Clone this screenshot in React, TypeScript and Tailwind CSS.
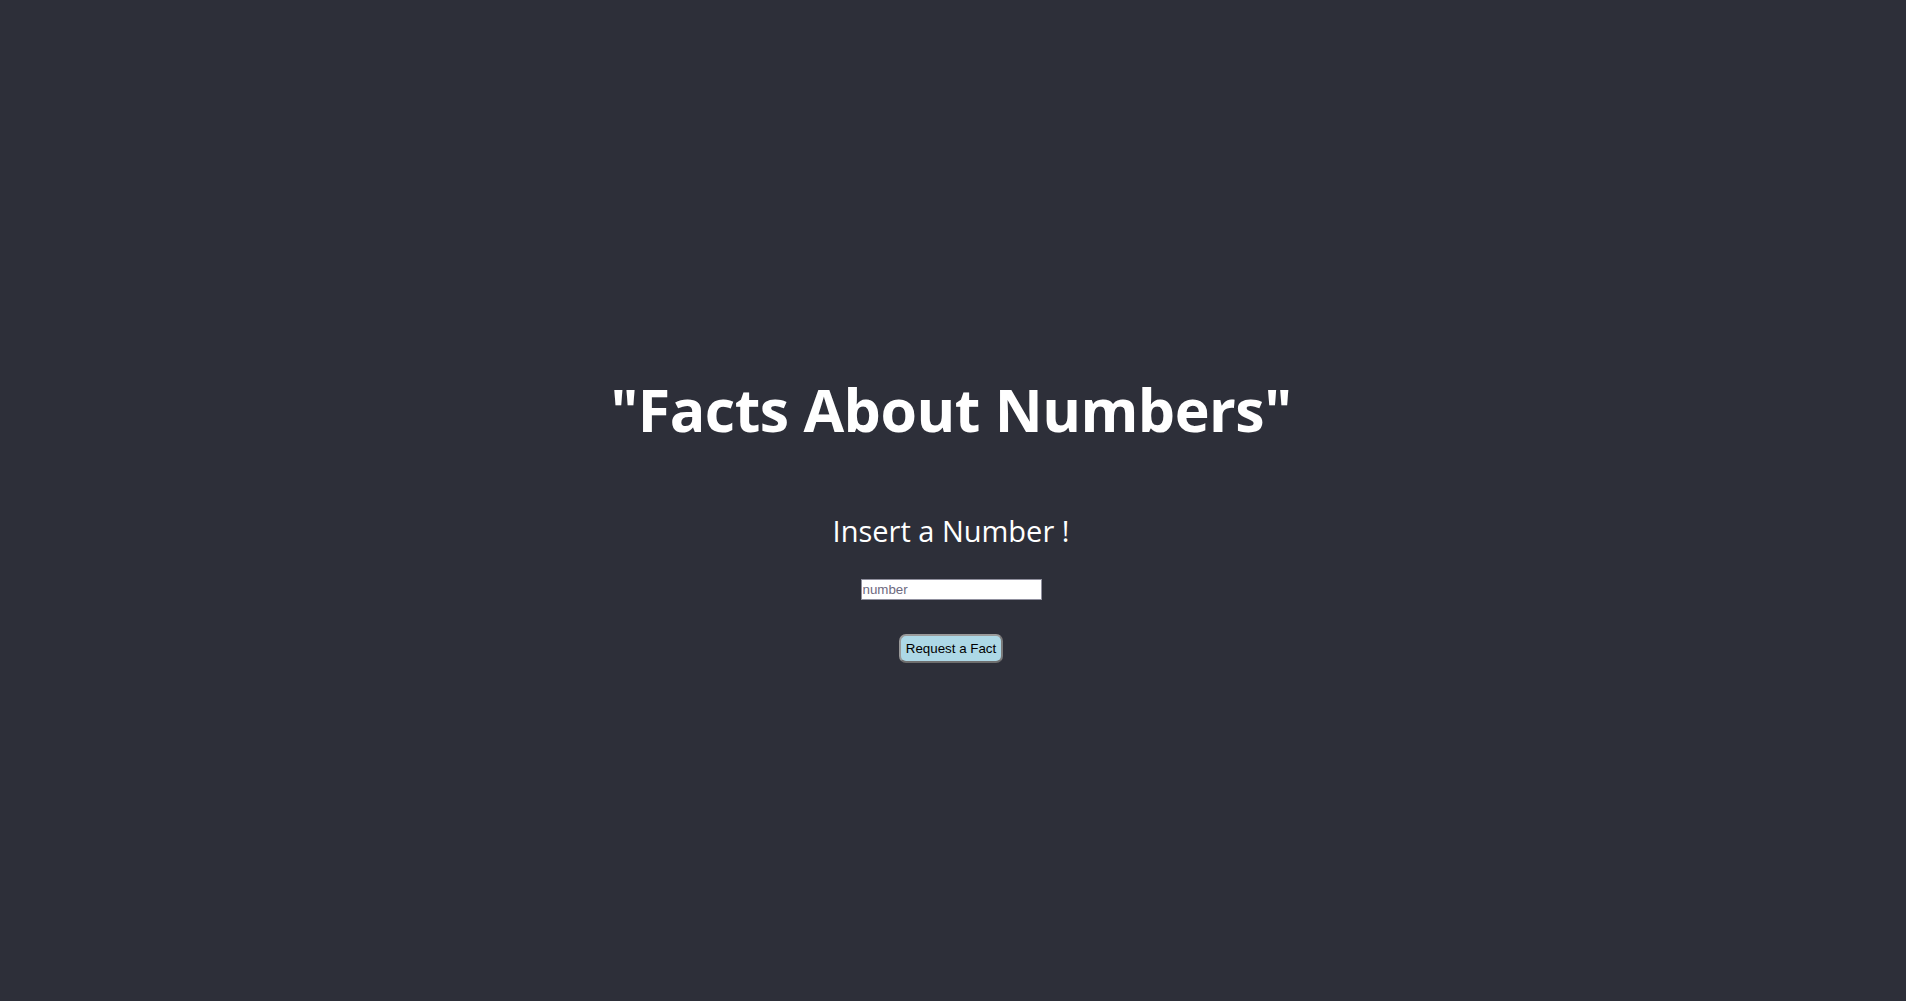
export default function App() {
  return (
    <div className="min-h-screen w-full bg-[#2d2f39] flex flex-col items-center pr-[4px] text-white font-['Open_Sans',sans-serif]">
      <h1 className="mt-[369px] text-[59px] leading-[80px] font-bold tracking-[-0.5px]">
        "Facts About Numbers"
      </h1>
      <h2 className="mt-[62px] text-[29px] leading-[40px] font-normal">
        Insert a Number !
      </h2>
      <input
        type="number"
        placeholder="number"
        className="mt-[28px] w-[181px] h-[21px] bg-white border border-[#8f8f9d] px-[1px] text-[13.33px] text-black placeholder:text-[#6d6a80] font-['Liberation_Sans',Arial,sans-serif] outline-none"
      />
      <button className="mt-[34px] w-[104px] h-[29px] bg-[#add8e6] border-2 border-[#9a9a9a] border-b-[#6e6e6e] border-r-[#7a7a7a] rounded-[7px] text-[13.33px] text-black font-['Liberation_Sans',Arial,sans-serif]">
        Request a Fact
      </button>
    </div>
  );
}
